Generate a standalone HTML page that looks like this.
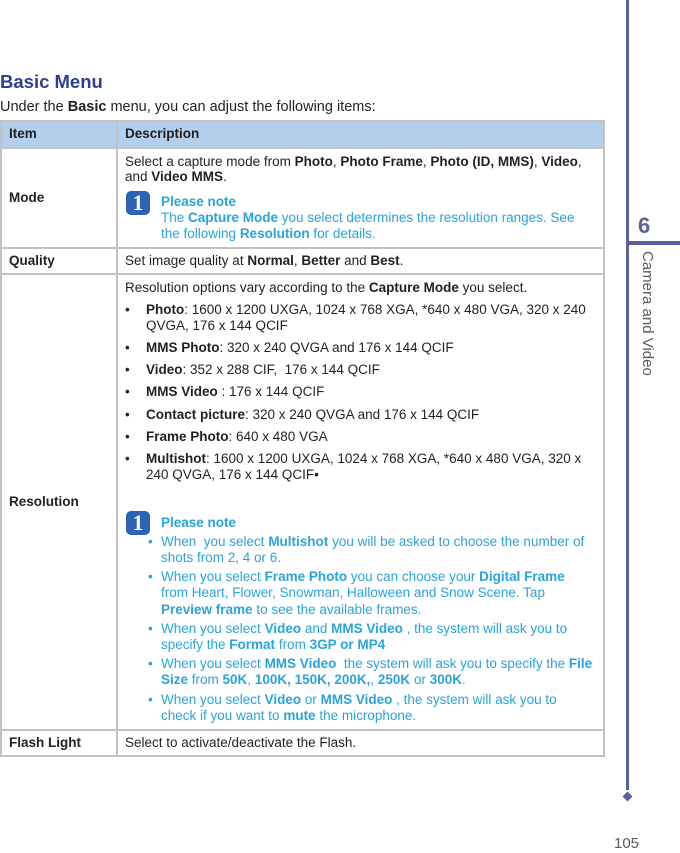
<!DOCTYPE html>
<html><head><meta charset="utf-8"><style>
body{margin:0;width:680px;height:849px;position:relative;background:#fff;font-family:"Liberation Sans",sans-serif;font-size:13.5px;color:#231f20;overflow:hidden}
.a{position:absolute;white-space:nowrap;line-height:16px}
.n{color:#29a3dc}
.hl{position:absolute;height:2px;background:#c2c2c2;left:0;width:605px}
.vl{position:absolute;width:2px;background:#c2c2c2}
.ic{position:absolute;width:24px;height:24px;background:#2d62b5;border-radius:5px;color:#fff;font-weight:bold;font-size:22px;line-height:24px;text-align:center;font-family:"Liberation Serif",serif}
</style></head><body>
<div class="a" style="left:0;top:72px;font-size:18.5px;font-weight:bold;color:#2e3e97;line-height:20px">Basic Menu</div>
<div class="a" style="left:0;top:99px;font-size:14.5px">Under the <b>Basic</b> menu, you can adjust the following items:</div>

<div style="position:absolute;left:0;top:121px;width:605px;height:26px;background:#b3cfec"></div>
<div class="hl" style="top:120px"></div>
<div class="hl" style="top:147px"></div>
<div class="hl" style="top:247px"></div>
<div class="hl" style="top:273px"></div>
<div class="hl" style="top:729px"></div>
<div class="hl" style="top:755px"></div>
<div class="vl" style="left:0;top:120px;height:637px"></div>
<div class="vl" style="left:116px;top:120px;height:637px"></div>
<div class="vl" style="left:603px;top:120px;height:637px"></div>

<div class="a" style="left:9px;top:126px;font-weight:bold">Item</div>
<div class="a" style="left:125px;top:126px;font-weight:bold">Description</div>

<div class="a" style="left:9px;top:190px;font-weight:bold">Mode</div>
<div class="a" style="left:125px;top:154px">Select a capture mode from <b>Photo</b>, <b>Photo Frame</b>, <b>Photo (ID, MMS)</b>, <b>Video</b>,</div>
<div class="a" style="left:125px;top:169px">and <b>Video MMS</b>.</div>
<div class="ic" style="left:126px;top:191px">1</div>
<div class="a n" style="left:161px;top:194px;font-weight:bold">Please note</div>
<div class="a n" style="left:161px;top:210px">The <b>Capture Mode</b> you select determines the resolution ranges. See</div>
<div class="a n" style="left:161px;top:226px">the following <b>Resolution</b> for details.</div>

<div class="a" style="left:9px;top:253px;font-weight:bold">Quality</div>
<div class="a" style="left:125px;top:253px">Set image quality at <b>Normal</b>, <b>Better</b> and <b>Best</b>.</div>

<div class="a" style="left:9px;top:494px;font-weight:bold">Resolution</div>
<div class="a" style="left:125px;top:280px">Resolution options vary according to the <b>Capture Mode</b> you select.</div>
<div class="a" style="left:125px;top:302px">•</div><div class="a" style="left:146px;top:302px"><b>Photo</b>: 1600 x 1200 UXGA, 1024 x 768 XGA, *640 x 480 VGA, 320 x 240</div>
<div class="a" style="left:146px;top:318px">QVGA, 176 x 144 QCIF</div>
<div class="a" style="left:125px;top:340px">•</div><div class="a" style="left:146px;top:340px"><b>MMS Photo</b>: 320 x 240 QVGA and 176 x 144 QCIF</div>
<div class="a" style="left:125px;top:362px">•</div><div class="a" style="left:146px;top:362px"><b>Video</b>: 352 x 288 CIF,&nbsp; 176 x 144 QCIF</div>
<div class="a" style="left:125px;top:384px">•</div><div class="a" style="left:146px;top:384px"><b>MMS Video</b> : 176 x 144 QCIF</div>
<div class="a" style="left:125px;top:407px">•</div><div class="a" style="left:146px;top:407px"><b>Contact picture</b>: 320 x 240 QVGA and 176 x 144 QCIF</div>
<div class="a" style="left:125px;top:429px">•</div><div class="a" style="left:146px;top:429px"><b>Frame Photo</b>: 640 x 480 VGA</div>
<div class="a" style="left:125px;top:451px">•</div><div class="a" style="left:146px;top:451px"><b>Multishot</b>: 1600 x 1200 UXGA, 1024 x 768 XGA, *640 x 480 VGA, 320 x</div>
<div class="a" style="left:146px;top:467px">240 QVGA, 176 x 144 QCIF•</div>
<div class="ic" style="left:126px;top:511px">1</div>
<div class="a n" style="left:161px;top:515px;font-weight:bold">Please note</div>
<div class="a n" style="left:148px;top:534px">•</div><div class="a n" style="left:161px;top:534px">When&nbsp; you select <b>Multishot</b> you will be asked to choose the number of</div>
<div class="a n" style="left:161px;top:550px">shots from 2, 4 or 6.</div>
<div class="a n" style="left:148px;top:569px">•</div><div class="a n" style="left:161px;top:569px">When you select <b>Frame Photo</b> you can choose your <b>Digital Frame</b></div>
<div class="a n" style="left:161px;top:585px">from Heart, Flower, Snowman, Halloween and Snow Scene. Tap</div>
<div class="a n" style="left:161px;top:602px"><b>Preview frame</b> to see the available frames.</div>
<div class="a n" style="left:148px;top:621px">•</div><div class="a n" style="left:161px;top:621px">When you select <b>Video</b> and <b>MMS Video</b> , the system will ask you to</div>
<div class="a n" style="left:161px;top:637px">specify the <b>Format</b> from <b>3GP or MP4</b></div>
<div class="a n" style="left:148px;top:656px">•</div><div class="a n" style="left:161px;top:656px">When you select <b>MMS Video</b>&nbsp; the system will ask you to specify the <b>File</b></div>
<div class="a n" style="left:161px;top:672px"><b>Size</b> from <b>50K</b>, <b>100K, 150K, 200K,</b>, <b>250K</b> or <b>300K</b>.</div>
<div class="a n" style="left:148px;top:692px">•</div><div class="a n" style="left:161px;top:692px">When you select <b>Video</b> or <b>MMS Video</b> , the system will ask you to</div>
<div class="a n" style="left:161px;top:708px">check if you want to <b>mute</b> the microphone.</div>

<div class="a" style="left:9px;top:735px;font-weight:bold">Flash Light</div>
<div class="a" style="left:125px;top:735px">Select to activate/deactivate the Flash.</div>

<div style="position:absolute;left:626px;top:0;width:3px;height:790px;background:#5b5f9c"></div>
<div style="position:absolute;left:626px;top:241px;width:54px;height:4px;background:#5b5f9c"></div>
<div class="a" style="left:638px;top:213px;font-size:22px;font-weight:bold;color:#5b5f9c;line-height:26px">6</div>
<div class="a" style="left:632px;top:251px;font-size:15px;color:#5a5a5a;transform-origin:0 0;transform:translate(24px,0) rotate(90deg);line-height:18px">Camera and Video</div>
<div style="position:absolute;left:624px;top:793px;width:7px;height:7px;background:#5b5f9c;transform:rotate(45deg)"></div>
<div class="a" style="left:614px;top:835px;font-size:15px;color:#5a5a5a;line-height:18px">105</div>
</body></html>
